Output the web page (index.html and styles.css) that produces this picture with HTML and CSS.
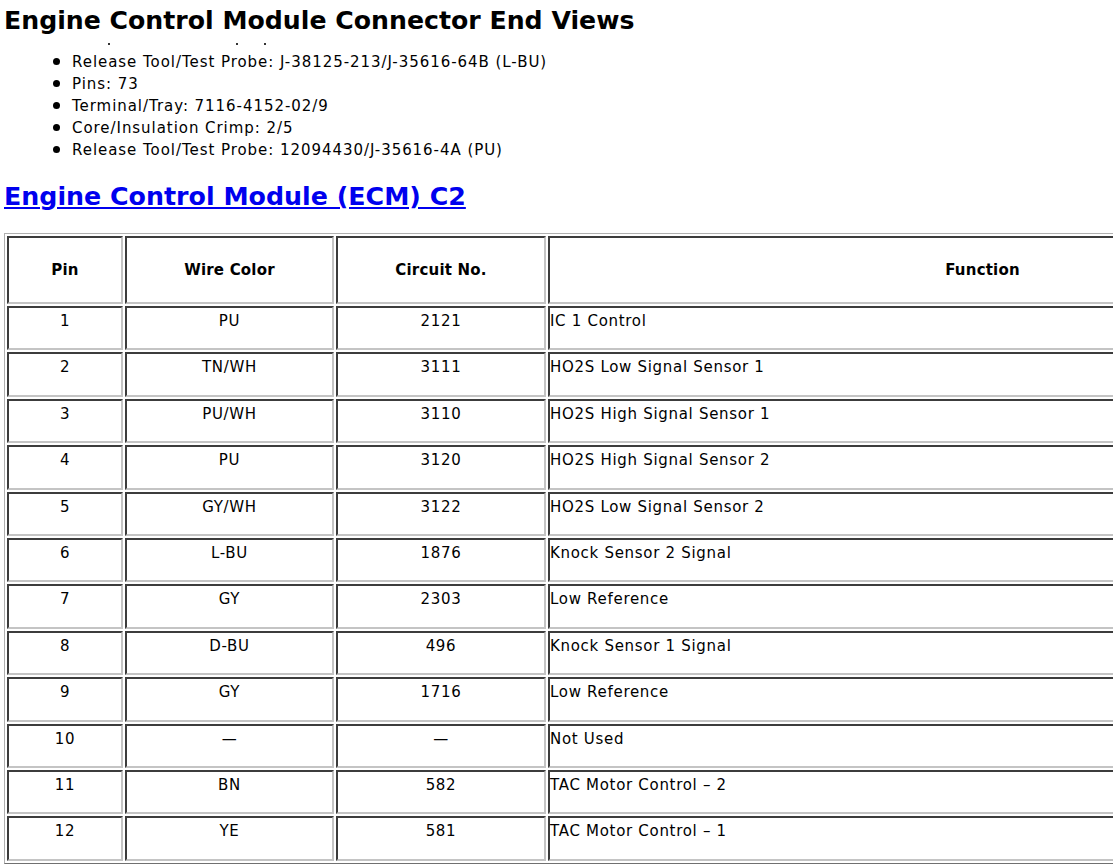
FILE: index.html
```html
<!DOCTYPE html>
<html>
<head>
<meta charset="utf-8">
<title>Engine Control Module Connector End Views</title>
<link rel="stylesheet" href="styles.css">
</head>
<body>
<h1 class="title">Engine Control Module Connector End Views</h1>
<div class="cutline"><span class="d1"></span><span class="d2"></span><span class="d3"></span></div>
<ul class="specs">
  <li>Release Tool/Test Probe: J-38125-213/J-35616-64B (L-BU)</li>
  <li>Pins: 73</li>
  <li>Terminal/Tray: 7116-4152-02/9</li>
  <li>Core/Insulation Crimp: 2/5</li>
  <li>Release Tool/Test Probe: 12094430/J-35616-4A (PU)</li>
</ul>
<h2 class="section"><a href="#c2">Engine Control Module (ECM) C2</a></h2>
<table class="pins">
  <thead>
    <tr><th class="c-pin">Pin</th><th class="c-wire">Wire Color</th><th class="c-circ">Circuit No.</th><th class="c-func">Function</th></tr>
  </thead>
  <tbody>
    <tr><td>1</td><td>PU</td><td>2121</td><td class="fn">IC 1 Control</td></tr>
    <tr><td>2</td><td>TN/WH</td><td>3111</td><td class="fn">HO2S Low Signal Sensor 1</td></tr>
    <tr><td>3</td><td>PU/WH</td><td>3110</td><td class="fn">HO2S High Signal Sensor 1</td></tr>
    <tr><td>4</td><td>PU</td><td>3120</td><td class="fn">HO2S High Signal Sensor 2</td></tr>
    <tr><td>5</td><td>GY/WH</td><td>3122</td><td class="fn">HO2S Low Signal Sensor 2</td></tr>
    <tr><td>6</td><td>L-BU</td><td>1876</td><td class="fn">Knock Sensor 2 Signal</td></tr>
    <tr><td>7</td><td>GY</td><td>2303</td><td class="fn">Low Reference</td></tr>
    <tr><td>8</td><td>D-BU</td><td>496</td><td class="fn">Knock Sensor 1 Signal</td></tr>
    <tr><td>9</td><td>GY</td><td>1716</td><td class="fn">Low Reference</td></tr>
    <tr><td>10</td><td>—</td><td>—</td><td class="fn">Not Used</td></tr>
    <tr><td>11</td><td>BN</td><td>582</td><td class="fn">TAC Motor Control – 2</td></tr>
    <tr><td>12</td><td>YE</td><td>581</td><td class="fn">TAC Motor Control – 1</td></tr>
  </tbody>
</table>
</body>
</html>
```
FILE: styles.css
```css
html, body {
  overflow: hidden;
}
body {
  margin: 0 4px;
  font-family: "DejaVu Sans", Verdana, sans-serif;
  font-size: 15px;
  color: #000;
  background: #fff;
}
.title {
  margin: 4px 0 0;
  font-size: 25.2px;
  font-weight: bold;
  line-height: 34px;
}
.cutline {
  position: relative;
  height: 13px;
}
.cutline span {
  position: absolute;
  top: 5px;
  width: 2px;
  height: 2px;
  background: #333;
}
.cutline .d1 { left: 104px; }
.cutline .d2 { left: 232px; }
.cutline .d3 { left: 260px; }
.specs {
  margin: 0;
  padding-left: 68px;
  list-style: none;
  letter-spacing: 0.95px;
}
.specs li {
  line-height: 22px;
}
.specs li::before {
  content: "";
  display: inline-block;
  width: 7px;
  height: 7px;
  border-radius: 50%;
  background: #000;
  margin-left: -19px;
  margin-right: 12px;
  vertical-align: 2px;
}
.section {
  margin: 20px 0 0;
  font-size: 25.3px;
  line-height: 32px;
}
.section a {
  color: #0000ee;
  text-decoration: underline;
}
.pins {
  margin-top: 20px;
  table-layout: fixed;
  width: 1416px;
  border-collapse: separate;
  border-spacing: 2px;
  border: 1px solid #b0b0b0;
  border-right-color: #707070;
  border-bottom-color: #707070;
}
.pins th, .pins td {
  box-sizing: border-box;
  border: 2px solid;
  border-color: #3c3c3c #c4c4c4 #c4c4c4 #3c3c3c;
  text-align: center;
}
.pins th {
  height: 68px;
  font-weight: bold;
  vertical-align: middle;
  padding: 0;
  letter-spacing: 0.2px;
}
.pins td {
  height: 44.4px;
  vertical-align: top;
  padding: 4px 1px 0;
  line-height: 18px;
  letter-spacing: 0.7px;
}
.pins td.fn {
  text-align: left;
  padding-left: 0;
}
.c-pin { width: 116px; }
.c-wire { width: 209px; }
.c-circ { width: 210px; }
.c-func { width: 869px; }
```
